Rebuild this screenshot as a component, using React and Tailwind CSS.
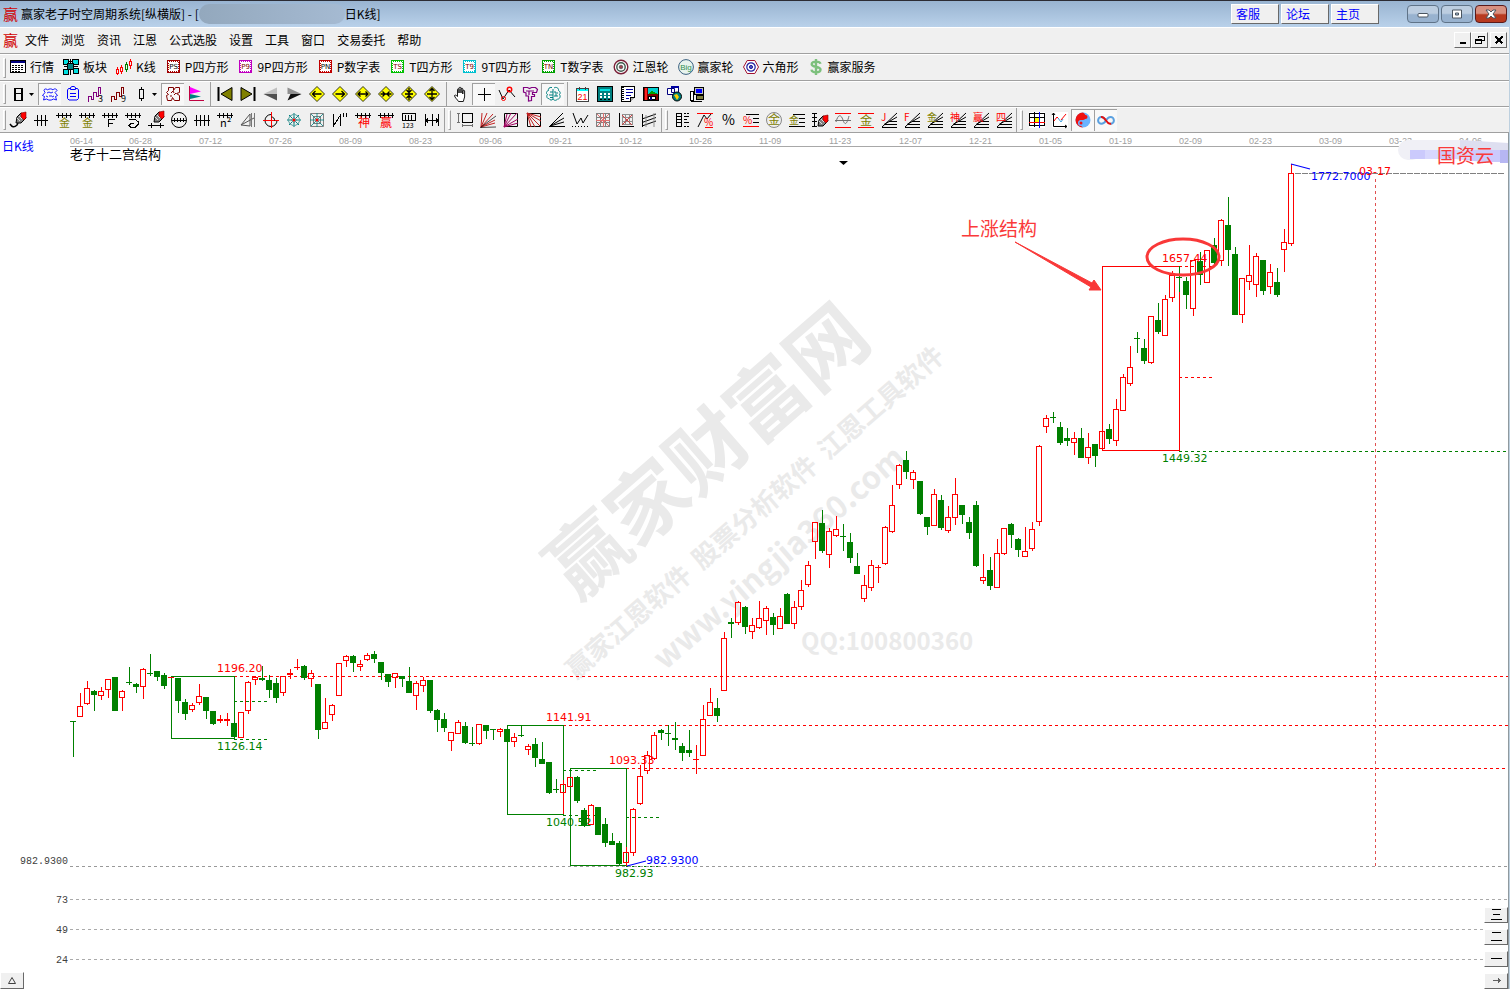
import clsx from "clsx";

const RED = "#ff0000";
const GREEN = "#008000";
const OLIVE = "#808000";
const SANS = "'Noto Sans CJK SC', 'Liberation Sans', sans-serif";
const NUM = "'DejaVu Sans', sans-serif";

/* ---------- icons ---------- */

function Svg({ children, crisp = true, size = "h-4 w-4" }) {
  return (
    <svg
      viewBox="0 0 16 16"
      className={clsx("shrink-0 overflow-visible", size)}
      fill="none"
      stroke="#000"
      shapeRendering={crisp ? "crispEdges" : "auto"}
      aria-hidden="true"
    >
      {children}
    </svg>
  );
}

function Glyph({ x, y, size = 10, fill = "#000", children }) {
  return (
    <text x={x} y={y} fontSize={size} fill={fill} stroke="none" fontFamily={SANS}>
      {children}
    </text>
  );
}

function TagIcon({ text, border, color = "#800000" }) {
  return (
    <Svg>
      <rect x="2.5" y="1.5" width="12" height="12" stroke={border} fill="#fff" />
      <rect x="3.5" y="2.5" width="10" height="10" stroke={border} strokeDasharray="1 1" />
      <text x="8.5" y="10" fontSize="7" textAnchor="middle" fill={color} stroke="none" fontFamily="'DejaVu Sans'">
        {text}
      </text>
    </Svg>
  );
}

// horizontal ruler with ticks, used by most of the period tools
const RULER = "M0 3.5h16M2.500 1v5M6.500 1v5M10.500 1v5M14.500 1v5";

function Ruler({ children }) {
  return (
    <Svg>
      <path d={RULER} />
      {children}
    </Svg>
  );
}

function Diamond({ children }) {
  return (
    <Svg crisp={false}>
      <path d="M8 .5 15.5 8 8 15.5.5 8z" fill="#ffff00" strokeWidth=".8" />
      <path d={children} strokeWidth="1.3" />
    </Svg>
  );
}

function Fan({ text, color }) {
  return (
    <Svg crisp={false}>
      <path d="M1 15 16 1M3 12.500 16 5M4 12.500h12M1 15.500h15M8 9.500h8" />
      <Glyph x={0} y={9} size={10} fill={color}>
        {text}
      </Glyph>
    </Svg>
  );
}

function Pen({ x = 0, y = 0 }) {
  return (
    <g transform={`translate(${x} ${y})`}>
      <path d="M4 11 5 5l4-4 4 2 1 3-5 5z" fill="#808080" />
      <path d="m9 1 5-1v6l-2 2-3-3z" fill="#ff0000" stroke="#800000" strokeWidth=".6" />
      <path d="m5 6 3 3M7 4l3 3" stroke="#ddd" />
    </g>
  );
}

const quoteTools = [
  ["行情", <Svg key="i"><rect x=".5" y="1.5" width="15" height="12" fill="#fff" /><path d="M1 3h14" stroke="#000080" strokeWidth="2" /><path d="M2 6.500h12M2 8.500h12M2 10.500h12M2 12.500h8" strokeDasharray="2 1" /></Svg>],
  ["板块", <Svg key="i"><path d="M.5.5h5v5h-5zM9.500.5h6v5h-6zM.5 10.500h5v5h-5zM10.500 9.500h5v5h-5z" fill="#00e0e0" /><path d="M4.500 4.500h6v6h-6z" fill="#008080" /><path d="M7.500 0v4M7.500 11v5M6 2.500h3M11 7.500h4M1 7.500h3" /></Svg>],
  ["K线", <Svg key="i"><path d="M.5 10.500h2v4h-2zM4.500 8.500h2v4h-2zM13.500 2.500h2v4h-2zM1.500 8v2M1.500 15v1M5.500 6v2M5.500 13v2M14.500 0v2M14.500 7v3" stroke="#ff0000" /><path d="M9.500 5.500h2v5h-2zM10.500 3v2M10.500 11v2" stroke="#008000" /></Svg>],
  ["P四方形", <TagIcon key="i" text="PS" border="#a00000" color="#000" />],
  ["9P四方形", <TagIcon key="i" text="P9" border="#c000c0" />],
  ["P数字表", <TagIcon key="i" text="PN" border="#c00000" color="#000" />],
  ["T四方形", <TagIcon key="i" text="TS" border="#00c000" />],
  ["9T四方形", <TagIcon key="i" text="T9" border="#00c0d0" />],
  ["T数字表", <TagIcon key="i" text="TN" border="#00a000" />],
  ["江恩轮", <Svg key="i" crisp={false}><circle cx="8" cy="8" r="6.8" stroke="#7a2038" strokeWidth="1.4" fill="#fff" /><circle cx="8" cy="8" r="4.2" stroke="#3c5a4c" strokeWidth="1.4" /><circle cx="8" cy="8" r="1.800" fill="#a04050" stroke="#555" strokeWidth=".8" /></Svg>],
  ["赢家轮", <Svg key="i" crisp={false}><circle cx="8" cy="8" r="7.400" stroke="#3a6080" fill="#e8f4ee" /><text x="8" y="11" fontSize="8" textAnchor="middle" fill="#2f8f4f" stroke="none" fontFamily="'Liberation Sans'">Big</text></Svg>],
  ["六角形", <Svg key="i" crisp={false}><path d="M4.200 1.500h7.600L15.500 8l-3.700 6.500H4.200L.5 8z" stroke="#a01030" fill="#fff" /><circle cx="8" cy="8" r="4.200" stroke="#2020a0" strokeWidth="1.200" /><circle cx="8" cy="8" r="1.600" fill="#5050c0" stroke="#2020a0" /></Svg>],
  ["赢家服务", <Svg key="i" crisp={false}><path d="M12.500 4.800C12 3 10 2.600 8 2.600c-2.500 0-4.300 1-4.300 2.700C3.700 9 12.500 6.800 12.500 10.600c0 1.800-2 2.800-4.400 2.800-2.300 0-4.300-.8-4.600-2.800M8 0v16" stroke="#7cc07c" strokeWidth="2.400" /></Svg>],
];

const viewTools = [
  { name: "日线", drop: true, icon: <Svg><path d="M4 2h9M4 14h9" /><path d="M5 1.500v13M12 1.500v13" strokeWidth="2" /><path d="M4 7.500h9" /></Svg> },
  { name: "云图", on: true, icon: <Svg crisp={false}><path d="M2 4.500c0-2 3-2 3.500-.5C7 2.500 10 2.500 11 4c1-2 4-1 4 .5L13 6.500l2.500 3-2 1 1 3.500-3-1c-2 1.500-5 1.500-7 0l-3 1 1-3.500-2-1 2.500-3zM5 7l2-1 2 1 2-1M4 10l2 1M12 10l-2 1M7 10h3" stroke="#0000ff" strokeWidth=".9" /></Svg> },
  { name: "报告", icon: <Svg crisp={false}><path d="M5 2.500H3.500L2.500 4v8.500L4 14h8l1.500-1.500V4l-1-1.500H11M5.500 3.500v-2L7 .5h2l1.500 1v2zM5 7.500h6M5 10.500h6" stroke="#0000ff" /></Svg> },
  { name: "三浪", icon: <Svg><path d="M.5 15.500v-5h3v3h2v-7h3v4h2v-9h2v6" stroke="#800080" /><Glyph x={10} y={16} size={9}>3</Glyph></Svg> },
  { name: "九浪", icon: <Svg><path d="M.5 15.500v-5h3v3h2v-7h3v4h2v-9h2v6" stroke="#800000" /><Glyph x={10} y={16} size={9}>9</Glyph></Svg> },
  { name: "K线样式", drop: true, icon: <Svg><path d="M6.500 3.500h4v9h-4zM8.500 1v2M8.500 13v2" /></Svg> },
  { name: "形态", on: true, icon: <Svg crisp={false}><path d="M3.500 1.500h5v3l2-3h4v5l-3 1 3 2v5h-5l-2-3-1 3h-4l-1-5 2-1-2-2 2-2zM6 7l2-2 1 2M9 9l2-2M5 10h2" stroke="#800000" /></Svg> },
  { name: "量价分布", icon: <Svg crisp={false}><path d="M2 1l11 4.500L2 8z" fill="#ff00ff" stroke="none" /><path d="M2 8l11 2.500L2 13z" fill="#008080" stroke="none" /><path d="M1.500 0v14.500H16" stroke="#c00040" /></Svg> },
  "sep",
  { name: "首页", icon: <Svg crisp={false}><path d="M1.500 1v14" strokeWidth="2" /><path d="M15 1.500v13L4 8z" fill={OLIVE} /></Svg> },
  { name: "末页", icon: <Svg crisp={false}><path d="M14.500 1v14" strokeWidth="2" /><path d="M1 1.500v13L12 8z" fill={OLIVE} /></Svg> },
  { name: "上一个", icon: <Svg crisp={false}><path d="M14 1.500V8H.5z" fill="#c0c0c0" stroke="none" /><path d="M14 14.500V8H.5z" fill="#505050" stroke="none" /></Svg> },
  { name: "下一个", icon: <Svg crisp={false}><path d="M1.500 1.500V8h14z" fill="#909090" stroke="none" /><path d="M1.500 14.500l3-6.500h11z" fill="#101010" stroke="none" /></Svg> },
  { name: "左移", icon: <Diamond>M12.500 8h-9M6.500 5l-3 3 3 3</Diamond> },
  { name: "右移", icon: <Diamond>M3.500 8h9M9.500 5l3 3-3 3</Diamond> },
  { name: "横向放大", icon: <Diamond>M3 8h10M5.500 5.500 3 8l2.500 2.500M10.500 5.500 13 8l-2.500 2.500</Diamond> },
  { name: "横向缩小", icon: <Diamond>M2.500 8h11M4.500 5.500 7 8l-2.500 2.500M11.500 5.500 9 8l2.500 2.500</Diamond> },
  { name: "纵向缩小", icon: <Diamond>M8 2v12M4 8h8M5.500 4 8 6.500 10.500 4M5.500 12 8 9.500l2.500 2.500</Diamond> },
  { name: "纵向放大", icon: <Diamond>M8 2v12M3 8h10M5.500 5 8 2.500 10.500 5M5.500 11 8 13.500l2.500-2.500</Diamond> },
  "sep",
  { name: "拖动", icon: <Svg crisp={false}><path d="M5.500 15.500c-1-2-4-4-4-6 1-1 2 0 3 1V3.500c0-1 1.500-1 1.500 0V7 2c0-1 2-1 2 0v5-4c0-1 1.800-1 1.800 0v5-3c0-1 1.800-1 1.800 0v6l-1.300 4.500z" fill="#fff" strokeWidth=".9" /></Svg> },
  { name: "十字光标", on: true, icon: <Svg><path d="M8.500 2v13M2 8.500h13" /></Svg> },
  { name: "折线", icon: <Svg crisp={false}><path d="M0 4l4 9 6-9 6 7" /><circle cx="4.500" cy="12.500" r="2" stroke="#ff0000" /><circle cx="10.500" cy="3.500" r="2.200" stroke="#ff0000" strokeWidth="1.500" /></Svg> },
  { name: "区间", icon: <Svg crisp={false}><path d="M1.500 1.500h4l2 1 2-1h4l2 2-1 3h-4v2h2v2h-3v4l-3 .5v-5H4v-3L1.500 6zM4 5h8M7 5v4" stroke="#800080" strokeWidth="1.200" /></Svg> },
  { name: "智能分析", on: true, icon: <Svg crisp={false}><path d="M7 1.500C4 1 3 3 3.500 4.500 1 5 1 8 2.500 8.500 1 10 2 13 4 12.500c1 2 3 2 4 .5V3M9 2c2-1.500 5 0 4.500 2.500 2 1 2 3 1 4 1.500 2 0 5-2 4.500-1 1.500-3 2-4.500 0M5 6h3M4 9h4M10 5v2h3M9 10h4M11 8v2M5 11.500h3" stroke="#008080" /></Svg> },
  "sep",
  { name: "日历", icon: <Svg><rect x="2.500" y="2.500" width="12" height="13" fill="#fff" stroke="#404040" /><path d="M3 4h11" stroke="#00ffff" strokeWidth="2" /><path d="M5.500 1v3M11.500 1v3" stroke="#404040" /><text x="8.500" y="13.500" fontSize="9" textAnchor="middle" fill="#ff0000" stroke="none" fontFamily="'Liberation Sans'">21</text></Svg> },
  { name: "计算器", icon: <Svg><rect x=".5" y=".5" width="15" height="15" fill="#008080" /><path d="M3 4h10" stroke="#00e0e0" strokeWidth="2" /><path d="M3 8h10M3 11h10" stroke="#fff" strokeWidth="2" strokeDasharray="2 2" /><path d="M3 13.500h10" strokeDasharray="2 2" /></Svg> },
  { name: "记事本", icon: <Svg><path d="M1.500.5h13v11l-4 4h-9z" fill="#fff" /><path d="M3 1v14" strokeWidth="2" strokeDasharray="1 1" /><path d="M6 3.500h7M6 6.500h7M6 9.500h5M6 12.500h3" stroke="#0000a0" /><path d="M14.500 11.500h-4v4" fill="#aaa" /></Svg> },
  { name: "保存图片", icon: <Svg><rect x=".5" y="1.500" width="15" height="13" fill="#800000" /><rect x="5" y="2" width="10" height="6" fill="#00d0d0" stroke="none" /><path d="m5 8 4-3 6 3z" fill="#00a000" stroke="none" /><rect x="2" y="2" width="2" height="12" fill="#ff2020" stroke="none" /><rect x="5.500" y="10.500" width="7" height="3" fill="#fff" /><path d="M7 11h2v3H7z" fill="#000080" stroke="none" /></Svg> },
  { name: "联网", icon: <Svg crisp={false}><path d="M1.500 2.500h7v6h-7zM5.500.5h7v6h-7z" fill="#fff" stroke="#000080" /><path d="M5 1h8" stroke="#0000a0" strokeWidth="2" /><circle cx="11" cy="10.500" r="4.500" fill="#008080" /><path d="m8 9 3-1 2 3-2 3z" fill="#ffd000" stroke="none" /></Svg> },
  { name: "远程", icon: <Svg><rect x="5.500" y="1.500" width="9" height="7" fill="#c0c0c0" /><rect x="7" y="3" width="6" height="4" fill="#0000ff" stroke="none" /><path d="M7.500 9.500h7v4h-7z" fill="#808040" /><path d="M1.500 5.500h3v9h-3z" fill="#fff" /><path d="M2 15.500h11" /></Svg> },
];

const periodTools = [
  ["画笔", <Svg key="i" crisp={false}><Pen x={2} /><path d="M0 12c2 3 4 4 7 1l1-2" strokeWidth="1.500" /></Svg>],
  ["等周期", <Svg key="i"><path d="M1 8.500h14M4.500 3v11M8.500 3v11M12.500 3v11" /></Svg>],
  ["黄金周期", <Ruler key="i"><Glyph x={3} y={15} fill={OLIVE} size={11}>金</Glyph></Ruler>],
  ["黄金时间", <Ruler key="i"><Glyph x={3} y={15} fill={OLIVE} size={11}>金</Glyph></Ruler>],
  ["斐波那契", <Ruler key="i"><path d="M6.500 15V7.500h6M6 11.500h5" /></Ruler>],
  ["螺旋周期", <Ruler key="i"><path d="M4 7.500h6l3 2v3l-3 3H6l-2-2 2-2h3" /></Ruler>],
  ["画线周期", <Svg key="i" crisp={false}><Pen x={2} y={-1} /><path d="M0 13.500h16M3.500 11v5M12.500 11v5" /></Svg>],
  ["圆周期", <Svg key="i" crisp={false}><circle cx="8" cy="8" r="7.500" /><path d="M1 8.500h14M3.500 6v4M6.500 6v4M9.500 6v4M12.500 6v4" /></Svg>],
  ["自由周期", <Svg key="i"><path d="M0 8.500h16M2.500 3v11M6.500 3v11M10.500 3v11M14.500 3v11" /></Svg>],
  ["平方周期", <Ruler key="i"><Glyph x={3} y={15} size={11}>n²</Glyph></Ruler>],
  ["速阻", <Svg key="i" crisp={false}><path d="m1 13 9-11v12zM1 13l13-7" stroke="#555" /><path d="M11.500 1v14M14.500 1v14" stroke="#777" /></Svg>],
  ["圆弧", <Svg key="i" crisp={false}><path d="M14 8.500A6 6 0 1 1 8 2.500" /><path d="M8.500 0v16M0 8.500h16" stroke="#ff0000" /><path d="M8.500 5a3 3 0 0 1 3 3.500" /></Svg>],
  ["蛛网", <Svg key="i" crisp={false}><path d="M8 1v14M1 8h14M3 3l10 10M13 3 3 13" stroke="#008080" /><path d="m8 2 4 2 2 4-2 4-4 2-4-2-2-4 2-4zM8 5l3 3-3 3-3-3z" stroke="#56a0a0" /><circle cx="8" cy="8" r="1.500" fill="#ff0000" stroke="none" /></Svg>],
  ["方网", <Svg key="i" crisp={false}><path d="M1.500 1.500h13v13h-13zM4.500 4.500h7v7h-7z" stroke="#808080" /><path d="M8 1v14M1 8h14M2 2l12 12M14 2 2 14" stroke="#008080" strokeWidth=".8" /><circle cx="8" cy="8" r="1.500" fill="#ff0000" stroke="none" /></Svg>],
  ["波浪尺", <Svg key="i"><path d="M1.500 2v12L8.500 3v11M11.500 1v4M14.500 1v4" /></Svg>],
  ["神奇周期", <Ruler key="i"><Glyph x={3} y={15} size={12} fill={RED}>神</Glyph></Ruler>],
  ["赢家周期", <Ruler key="i"><Glyph x={2} y={15} size={12} fill={RED}>赢</Glyph></Ruler>],
  ["刻度", <Svg key="i"><path d="M1 1.500h14M1 8.500h14M1.500 1v8M4.500 3v6M7.500 3v6M10.500 3v6M14.500 1v8" /><Glyph x={1} y={16} size={7}>123</Glyph></Svg>],
  ["平移周期", <Svg key="i"><path d="M1.500 2v12M8.500 2v12M14.500 2v12M2 8.500h12M4 6.500l-2 2 2 2M12 6.500l2 2-2 2" /></Svg>],
];

const shapeTools = [
  ["测量", <Svg key="i"><path d="M5.500 1.500h10v9h-10z" /><path d="M1.500 1v10M0 1.500h3M0 10.500h3M5 13.500h11M5.500 12v3M15.500 12v3" stroke="#707070" /></Svg>],
  ["江恩线", <Svg key="i" crisp={false}><path d="M1 15 2 1M1 15 7 1M1 15 13 2M1 15l14-7M1 15l14-4" stroke="#c02020" /><path d="M0 15.500 16 15M1 15 16 4" stroke="#000" strokeWidth=".7" /></Svg>],
  ["扇形框", <Svg key="i" crisp={false}><path d="M1.500 1.500h13v13h-13z" /><path d="M1 15 14 1M1 15 8 1M1 15l14-8M1 15 4 2M1 15l14-4" stroke="#a00060" /></Svg>],
  ["反扇形框", <Svg key="i" crisp={false}><path d="M1.500 1.500h13v13h-13z" /><path d="m1 1 14 14M1 1l8 14M1 1l14 8M1 1l4 14M1 1l14 4" stroke="#c02020" /></Svg>],
  ["射线", <Svg key="i" crisp={false}><path d="M1 14 14 1M1 14l14-8M1 14l14-4M0 14.500h16" /></Svg>],
  ["W形", <Svg key="i" crisp={false}><path d="m1 1 4 11 4-6 2 5 5-8" /><path d="M0 14.500h16" strokeDasharray="1 2" /></Svg>],
  ["网格", <Svg key="i"><path d="M1.500 1.500h13v13h-13zM5.500 1v14M10.500 1v14M1 5.500h14M1 10.500h14" stroke="#808080" /><path d="M2 2l12 12M14 2 2 14M1 8.500h14M8.500 1v14" stroke="#e07070" /></Svg>],
  ["坐标网格", <Svg key="i"><path d="M4.500 2.500h10v10h-10zM7.500 2v11M11.500 2v11M4 5.500h11M4 9.500h11" stroke="#909090" /><path d="m4 3 10 10M14 3 4 13" stroke="#d04040" /><path d="M1.500 1v14M1 14.500h15" /></Svg>],
  ["平行线", <Svg key="i" crisp={false}><path d="M1.500 2v13M1 7l14-5M1 10.500l14-5M1 14l14-5" /><path d="M13 1v14M5 3v12" stroke="#909090" /></Svg>],
];

const priceTools = [
  ["标尺", <Svg key="i"><path d="M2.500 1v14M7.500 1v14M2 1.500h5M2 4.500h5M2 7.500h5M2 10.500h5M2 14.500h5M10 1.500h2M13 1.500h2M10 4.500h5M10 7.500h3M10 10.500h5M10 14.500h2M13 14.500h2" /></Svg>],
  ["涨幅", <Svg key="i" crisp={false}><path d="M0 1.500h16M8 15.500h8" stroke="#ff0000" /><path d="m1 15 6-12 3 4 4-5" /><Glyph x={7} y={14} size={10} fill={RED}>%</Glyph></Svg>],
  ["百分比", <Svg key="i"><Glyph x={2} y={13} size={14}>%</Glyph></Svg>],
  ["百分线", <Svg key="i"><path d="M3 2.500h13M10 6.500h6M10 10.500h6" /><path d="M0 14.500h16" stroke="#ff0000" /><Glyph x={0} y={12} size={10} fill={RED}>%</Glyph></Svg>],
  ["金圆", <Svg key="i" crisp={false}><circle cx="8" cy="8" r="7.500" stroke="#888" /><Glyph x={2} y={12} size={12} fill={OLIVE}>金</Glyph></Svg>],
  ["金分割", <Svg key="i"><path d="M4 2.500h12M10 6.500h6M10 10.500h6M0 14.500h16" /><Glyph x={0} y={12} size={10} fill={OLIVE}>金</Glyph></Svg>],
  ["价格笔", <Svg key="i" crisp={false}><path d="M2.500 1v14M0 5.500h5M0 9.500h5M0 1.500h5M0 14.500h5" /><Pen x={2} y={3} /></Svg>],
  ["正弦", <Svg key="i" crisp={false}><path d="M0 1.500h16M0 15.500h16" stroke="#ff0000" /><path d="M1 10c2-8 5-8 7-2s4 4 6-4M0 8.500h16" stroke="#707070" /></Svg>],
  ["黄金线", <Svg key="i"><path d="M0 1.500h16M0 15.500h16" stroke="#ff0000" /><Glyph x={2} y={13} size={12} fill={OLIVE}>金</Glyph></Svg>],
  ["J线", <Fan key="i" text="J" color={RED} />],
  ["F线", <Fan key="i" text="F" color={RED} />],
  ["金线", <Fan key="i" text="金" color={OLIVE} />],
  ["神线", <Fan key="i" text="神" color={RED} />],
  ["赢线", <Fan key="i" text="赢" color={RED} />],
  ["四线", <Fan key="i" text="四" color={RED} />],
];

const structureTools = [
  ["九宫", <Svg key="i"><rect width="16" height="16" fill="#fff" stroke="none" /><rect x="5" y="5" width="6" height="5" fill="#ffff00" stroke="none" /><path d="M.5 1.500h15v12H.5zM5.500 0v15M0 5.500h16" /><path d="M0 10.500h16" stroke="#ff0000" /><path d="M10.500 0v16" stroke="#0000ff" /></Svg>],
  ["走势", <Svg key="i" crisp={false}><rect width="16" height="16" fill="#fff" stroke="none" /><path d="M1.500 1v13.500H15M0 3l1.500-2L3 3M13 13l2 1.500L13 16" /><path d="m2 9 3-4 2 2M9 8l5-6" stroke="#ff0000" /><path d="m6 6 3 4 2-3" stroke="#40a0e0" /></Svg>],
  ["太极", <Svg key="i" crisp={false}><circle cx="8" cy="8" r="7.500" fill="#6ab4ff" stroke="none" /><path d="M8 .5a7.500 7.500 0 0 0 0 15C4 13 5 8 8 8s5-4 0-7.500z" fill="#f01010" stroke="none" /><circle cx="10.500" cy="5" r="2" fill="#f01010" stroke="none" /><circle cx="6" cy="11" r="3" fill="#6ab4ff" stroke="none" /><circle cx="6" cy="11" r="1.500" fill="#f01010" stroke="none" /></Svg>, true],
  ["无限", <Svg key="i" crisp={false}><path d="M8 8.500C6 5.500 4.500 5 3.500 5a3.300 3.300 0 0 0 0 6.800C5 11.800 6.500 11 8 8.500s3-3.500 4.500-3.500a3.300 3.300 0 0 1 0 6.800" stroke="#5aa0e0" strokeWidth="2" /><path d="M3 5c2-.5 4 2 5 3.500s3 4 5 3" stroke="#e01010" strokeWidth="2" /></Svg>, true],
];

/* ---------- window chrome ---------- */

const menus = ["文件", "浏览", "资讯", "江恩", "公式选股", "设置", "工具", "窗口", "交易委托", "帮助"];

const BEVEL = "border border-t-white border-l-white border-r-[#696969] border-b-[#696969] bg-[#f0f0f0]";

function WindowButton({ label, danger, children }) {
  return (
    <button
      aria-label={label}
      className={clsx(
        "flex h-[18px] w-8 items-center justify-center rounded-sm border",
        danger
          ? "border-[#5a1a1a] bg-linear-to-b from-[#d89080] from-45% to-[#b83a20] to-55%"
          : "border-[#5f7388] bg-linear-to-b from-[#bccde0] from-45% to-[#98b2cf] to-55%"
      )}
    >
      <svg viewBox="0 0 12 10" className="h-2.5 w-3" fill="#fff" stroke="#4a5560" aria-hidden="true">
        {children}
      </svg>
    </button>
  );
}

function TitleBar() {
  return (
    <header className="flex h-[27px] items-center border-t border-[#2c2c34] bg-linear-to-b from-[#99b4d1] to-[#b9d1ea] pl-[3px] pr-[3px]">
      <span className="w-[18px] text-[15px] leading-4 text-[#d00000]">赢</span>
      <h1 className="flex items-center text-xs whitespace-pre text-black">
        赢家老子时空周期系统[纵横版] - [
        <span className="h-5 w-[146px] rounded-full bg-linear-to-r from-[#93a8bd] to-[#a5bad2]" />
        日K线]
      </h1>
      <div className="ml-auto flex gap-0.5">
        {["客服", "论坛", "主页"].map((t) => (
          <button key={t} className={clsx("h-5 w-12 pl-1 text-left text-xs leading-4 text-[#0000ff]", BEVEL)}>
            {t}
          </button>
        ))}
      </div>
      <div className="ml-7 flex gap-0.5">
        <WindowButton label="最小化">
          <rect x="1" y="4.500" width="10" height="3.500" rx="1" />
        </WindowButton>
        <WindowButton label="最大化">
          <path d="M1.500 1h9v8h-9zM4.500 4v2h3V4z" fillRule="evenodd" />
        </WindowButton>
        <WindowButton label="关闭" danger>
          <path d="M1 1h3l2 2 2-2h3L8 5l3 4H8L6 7 4 9H1l3-4z" />
        </WindowButton>
      </div>
    </header>
  );
}

function MdiButton({ label, children }) {
  return (
    <button aria-label={label} className={clsx("flex h-4 w-[17px] items-center justify-center", BEVEL)}>
      <svg viewBox="0 0 10 10" className="h-2.5 w-2.5" fill="none" stroke="#000" shapeRendering="crispEdges" aria-hidden="true">
        {children}
      </svg>
    </button>
  );
}

function MenuBar() {
  return (
    <nav className="flex h-[27px] items-center border-t border-b border-t-white border-b-[#a0a0a0] pr-0.5 pb-px pl-[3px]">
      <span className="w-[22px] text-[15px] leading-4 text-[#d00000]">赢</span>
      <div className="flex gap-3 text-xs">
        {menus.map((m) => (
          <button key={m}>{m}</button>
        ))}
      </div>
      <div className="ml-auto flex">
        <MdiButton label="最小化子窗口">
          <path d="M2 8h6" strokeWidth="2" />
        </MdiButton>
        <MdiButton label="还原子窗口">
          <path d="M3.500 3V1.500h6v4H7M3 1h7M.5 4.500h6v4h-6zM0 5h7" />
        </MdiButton>
        <span className="w-0.5" />
        <MdiButton label="关闭子窗口">
          <path d="m1.500 1.500 7 7m0-7-7 7" strokeWidth="2" />
        </MdiButton>
      </div>
    </nav>
  );
}

function Grip() {
  return <span className="h-5 w-[3px] shrink-0 border border-t-white border-l-white border-r-[#a0a0a0] border-b-[#a0a0a0]" />;
}

function ToolButton({ name, on, drop, children }) {
  return (
    <>
      <button
        aria-label={name}
        title={name}
        className={clsx(
          "flex h-[22px] shrink-0 items-center justify-center",
          drop ? "w-[21px]" : "w-[23px]",
          on ? "border-t border-l border-[#a0a0a0] bg-[#f8f8f8] pb-px" : "pl-px"
        )}
      >
        {children}
      </button>
      {drop && (
        <button aria-label={`${name}选项`} className="flex h-[22px] w-2.5 shrink-0 items-center pl-px">
          <svg viewBox="0 0 5 3" className="h-[3px] w-[5px]" aria-hidden="true">
            <path d="M0 0h5L2.500 3z" />
          </svg>
        </button>
      )}
    </>
  );
}

function GroupBreak() {
  return (
    <div className="flex h-full w-2.5 shrink-0 items-center justify-between pr-0.5 pl-px">
      <span className="h-full w-px bg-[#a0a0a0]" />
      <Grip />
    </div>
  );
}

function Toolbar({ height, children }) {
  return (
    <div role="toolbar" className={clsx("flex items-center border-t border-b border-t-white border-b-[#a0a0a0] pl-[3px]", height)}>
      <Grip />
      {children}
    </div>
  );
}

function ToolGroup({ items }) {
  return items.map(([name, icon, on]) => (
    <ToolButton key={name} name={name} on={on}>
      {icon}
    </ToolButton>
  ));
}

/* ---------- chart ---------- */

const FIRST_X = 73;
const STEP = 7;

// [up/down, high, body top, body bottom, low]
const candles = [
  ["g", 721, 721, 722, 757], ["r", 693, 706, 717, 717], ["r", 681, 688, 704, 705], ["g", 690, 691, 695, 711],
  ["r", 687, 691, 696, 700], ["r", 679, 679, 690, 698], ["g", 677, 677, 711, 711], ["r", 690, 691, 698, 711],
  ["g", 667, 682, 683, 685], ["g", 683, 684, 687, 693], ["r", 668, 669, 687, 699], ["g", 654, 673, 674, 676],
  ["g", 671, 671, 677, 681], ["g", 673, 675, 686, 689], ["r", 677, 677, 678, 678], ["g", 678, 678, 701, 713],
  ["g", 699, 702, 714, 720], ["r", 703, 705, 710, 712], ["r", 684, 696, 703, 705], ["g", 697, 697, 711, 719],
  ["g", 711, 711, 724, 725], ["r", 715, 719, 721, 723], ["r", 713, 719, 721, 726], ["g", 723, 723, 737, 737],
  ["r", 712, 712, 738, 738], ["r", 681, 682, 711, 714], ["r", 676, 677, 680, 685], ["g", 666, 678, 680, 681],
  ["g", 675, 680, 690, 698], ["g", 678, 683, 698, 703], ["r", 676, 676, 693, 696], ["r", 669, 673, 675, 679],
  ["r", 659, 667, 668, 670], ["g", 665, 666, 678, 680], ["r", 670, 673, 679, 687], ["g", 684, 684, 730, 739],
  ["r", 698, 722, 729, 729], ["r", 704, 705, 715, 721], ["r", 663, 663, 696, 696], ["r", 655, 656, 661, 667],
  ["g", 655, 656, 663, 672], ["r", 660, 664, 667, 671], ["r", 653, 655, 660, 661], ["g", 651, 654, 659, 663],
  ["g", 662, 662, 673, 680], ["g", 674, 674, 682, 687], ["r", 673, 673, 678, 688], ["g", 676, 676, 679, 687],
  ["g", 667, 681, 693, 693], ["r", 681, 683, 696, 710], ["r", 677, 680, 686, 692], ["g", 680, 680, 711, 713],
  ["g", 709, 710, 720, 732], ["g", 713, 719, 728, 732], ["r", 732, 732, 741, 751], ["r", 720, 722, 734, 734],
  ["g", 722, 726, 743, 744], ["g", 727, 743, 744, 746], ["r", 724, 724, 744, 745], ["g", 725, 725, 731, 739],
  ["g", 729, 729, 730, 740], ["r", 728, 729, 732, 737], ["g", 729, 729, 742, 742], ["r", 733, 737, 742, 747],
  ["g", 725, 735, 736, 737], ["r", 744, 746, 750, 755], ["g", 738, 744, 758, 767], ["g", 742, 759, 764, 764],
  ["g", 762, 762, 793, 794], ["g", 779, 789, 790, 793], ["r", 780, 784, 793, 814], ["r", 777, 777, 787, 787],
  ["g", 776, 777, 801, 803], ["g", 808, 810, 826, 827], ["r", 804, 805, 825, 825], ["g", 807, 807, 835, 835],
  ["g", 818, 824, 843, 847], ["g", 833, 841, 845, 845], ["g", 841, 843, 864, 865], ["r", 847, 852, 863, 866],
  ["r", 808, 809, 853, 856], ["r", 765, 776, 804, 805], ["r", 751, 755, 771, 774], ["r", 732, 735, 759, 760],
  ["g", 729, 730, 733, 740], ["g", 725, 733, 734, 746], ["g", 722, 738, 740, 750], ["g", 743, 746, 753, 761],
  ["g", 730, 750, 753, 757], ["r", 745, 759, 760, 774], ["r", 705, 719, 756, 756], ["r", 688, 702, 716, 716],
  ["g", 698, 708, 716, 722], ["r", 632, 638, 691, 691], ["g", 618, 622, 624, 638], ["r", 601, 602, 623, 625],
  ["g", 606, 607, 627, 634], ["r", 618, 625, 632, 639], ["r", 601, 618, 628, 629], ["r", 606, 608, 621, 635],
  ["g", 613, 617, 625, 635], ["r", 608, 616, 629, 629], ["g", 593, 594, 624, 624], ["r", 601, 607, 624, 629],
  ["r", 580, 590, 607, 610], ["r", 561, 565, 585, 587], ["r", 522, 522, 542, 559], ["g", 510, 523, 551, 553],
  ["r", 528, 531, 555, 568], ["r", 516, 529, 536, 537], ["g", 524, 536, 537, 551], ["g", 533, 542, 558, 563],
  ["g", 553, 566, 574, 574], ["r", 575, 585, 599, 602], ["r", 560, 565, 588, 591], ["r", 565, 567, 568, 583],
  ["r", 526, 527, 564, 565], ["r", 485, 505, 532, 533], ["r", 464, 465, 485, 489], ["g", 451, 460, 472, 479],
  ["r", 470, 472, 480, 489], ["g", 481, 481, 514, 515], ["g", 517, 517, 527, 535], ["r", 489, 494, 526, 526],
  ["g", 495, 500, 528, 530], ["r", 506, 517, 531, 533], ["r", 478, 494, 518, 525], ["g", 505, 505, 515, 524],
  ["g", 517, 522, 533, 539], ["g", 501, 505, 566, 567], ["r", 554, 577, 581, 584], ["g", 557, 570, 586, 590],
  ["r", 539, 553, 588, 588], ["r", 528, 528, 554, 555], ["g", 523, 524, 535, 548], ["g", 538, 539, 550, 557],
  ["r", 527, 551, 557, 557], ["r", 522, 529, 549, 551], ["r", 445, 446, 522, 526], ["r", 415, 418, 427, 433],
  ["g", 412, 417, 418, 423], ["g", 422, 427, 443, 445], ["g", 428, 438, 441, 446], ["r", 432, 438, 443, 455],
  ["g", 428, 438, 458, 458], ["r", 433, 447, 458, 464], ["g", 444, 444, 456, 467], ["r", 431, 431, 449, 449],
  ["g", 424, 429, 439, 444], ["r", 399, 409, 441, 446], ["r", 374, 377, 411, 411], ["r", 346, 367, 384, 386],
  ["g", 332, 338, 339, 353], ["g", 339, 348, 361, 364], ["r", 316, 316, 363, 364], ["g", 303, 320, 332, 334],
  ["r", 295, 299, 336, 336], ["r", 271, 275, 298, 302], ["g", 266, 277, 278, 292], ["g", 277, 281, 295, 309],
  ["r", 260, 260, 309, 316], ["g", 252, 261, 275, 285], ["r", 250, 250, 283, 283], ["g", 238, 245, 263, 265],
  ["r", 219, 220, 261, 266], ["g", 197, 225, 250, 266], ["g", 247, 254, 315, 315], ["r", 278, 278, 315, 323],
  ["r", 245, 275, 282, 290], ["r", 253, 256, 285, 297], ["g", 260, 260, 291, 295], ["r", 264, 272, 287, 294],
  ["g", 268, 282, 295, 297], ["r", 229, 242, 250, 272], ["r", 164, 173, 244, 246],
];

const dates = [
  "06-14", "06-28", "07-12", "07-26", "08-09", "08-23", "09-06", "09-21", "10-12", "10-26", "11-09",
  "11-23", "12-07", "12-21", "01-05", "01-19", "02-09", "02-23", "03-09", "03-23", "04-06",
];

// [x1, x2, y, color]
const levels = [
  [234, 1508, 676, RED], [563, 1508, 725, RED], [626, 1508, 768, RED], [1179, 1213, 377, RED], [1179, 1213, 266, RED],
  [234, 268, 701, GREEN], [234, 268, 739, GREEN], [563, 597, 770, GREEN], [563, 597, 815, GREEN],
  [626, 660, 817, GREEN], [626, 660, 866, GREEN], [1179, 1508, 451, GREEN],
  [70, 1508, 866, "#999999"], [70, 1508, 899, "#aaaaaa"], [70, 1508, 929, "#aaaaaa"], [70, 1508, 959, "#aaaaaa"],
];

// [x, y, width, height, color]
const boxes = [
  [171, 676, 63, 62, GREEN], [507, 725, 56, 89, GREEN], [570, 768, 56, 97, GREEN], [1102, 266, 77, 184, RED],
];

const prices = [
  [217, 672, "1196.20", RED], [217, 750, "1126.14", GREEN], [546, 721, "1141.91", RED], [609, 764, "1093.33", RED],
  [546, 826, "1040.52", GREEN], [615, 877, "982.93", GREEN], [646, 864, "982.9300", "#0000ff"],
  [1162, 262, "1657.44", RED], [1162, 462, "1449.32", GREEN], [1311, 180, "1772.7000", "#0000ff"],
  [1359, 175, "03-17", RED],
];

const axis = [[864, "982.9300"], [903, "73"], [933, "49"], [963, "24"]];

function Candle({ index, data }) {
  const [dir, high, top, bottom, low] = data;
  const x = FIRST_X + index * STEP;
  const hollow = dir === "r" && bottom - top > 2;
  const color = dir === "r" ? RED : GREEN;
  return (
    <g>
      {top > high && <rect x={x} y={high} width="1" height={top - high} fill={color} />}
      {low > bottom && <rect x={x} y={bottom} width="1" height={low - bottom} fill={color} />}
      {hollow ? (
        <rect x={x - 2.5} y={top + 0.5} width="5" height={bottom - top - 1} fill="none" stroke={color} />
      ) : (
        <rect x={x - 3} y={top} width="6" height={bottom - top} fill={color} />
      )}
    </g>
  );
}

function Watermark() {
  return (
    <g fill="#eaeaea" fontFamily={SANS} fontWeight="700">
      <text transform="translate(577 602) rotate(-41)" fontSize="79">赢家财富网</text>
      <g transform="translate(576 680) rotate(-41)" fontSize="26">
        <text>赢家江恩软件</text>
        <text x="167">股票分析软件</text>
        <text x="334">江恩工具软件</text>
      </g>
      <text transform="translate(665 671) rotate(-41)" fontSize="31">www.yingjia360.com</text>
      <text x="801" y="650" fontSize="24">QQ:100800360</text>
    </g>
  );
}

function Chart() {
  return (
    <svg viewBox="0 133 1508 856" className="block w-full" role="img" aria-label="日K线图">
      <Watermark />

      <g fontFamily="'Liberation Sans', sans-serif" fontSize="9" fill="#a0a0a0">
        {dates.map((d, i) => (
          <text key={d} x={i === 0 ? 70 : 59 + i * 70} y="144">{d}</text>
        ))}
      </g>
      <rect x="70" y="146" width="1438" height="1" fill="#a8a8a8" />
      <g fontFamily={SANS}>
        <text x="2" y="151" fontSize="12" fill="#0000ff">日K线</text>
        <text x="70" y="159" fontSize="13" fill="#000">老子十二宫结构</text>
      </g>
      <path d="M839 161h9l-4.500 4z" fill="#000" />

      <g shapeRendering="crispEdges">
        {levels.map(([x1, x2, y, color]) => (
          <line key={`${x1}-${y}`} x1={x1} x2={x2} y1={y + 0.5} y2={y + 0.5} stroke={color} strokeDasharray="3 3" />
        ))}
        <line x1="1295" x2="1504" y1="173.5" y2="173.5" stroke="#808080" strokeDasharray="6 1" />
        <line x1="1375.5" x2="1375.5" y1="179" y2="866" stroke="#e05050" strokeDasharray="3 3" />
        {boxes.map(([x, y, w, h, color]) => (
          <rect key={`${x}-${y}`} x={x + 0.5} y={y + 0.5} width={w} height={h} fill="none" stroke={color} />
        ))}
        {candles.map((c, i) => (
          <Candle key={i} index={i} data={c} />
        ))}
      </g>
      <path d="M1291 164l19 5M627 866l19-5" stroke="#0000ff" strokeWidth="1.200" />

      {/* censored stock code behind the name */}
      <g>
        <rect x="1398" y="140" width="24" height="20" rx="10" fill="#f0f0f6" />
        <path d="M1408 140h52l40 3h8v7h-100z" fill="#f0f0f6" />
        <path d="M1460 140l48 3v8h-48z" fill="#dedff0" />
        <path d="M1410 150h98v12h-25l-27-3h-46z" fill="#cbcafc" />
        <path d="M1425 150h15v9h-15zM1455 150h15v9h-15z" fill="#d8d8fd" />
        <path d="M1500 150h8v13h-8z" fill="#b6b6f2" />
      </g>

      <g fontFamily={NUM} fontSize="11">
        {prices.map(([x, y, t, color]) => (
          <text key={t} x={x} y={y} fill={color}>{t}</text>
        ))}
      </g>
      <g fontFamily="'Liberation Mono', monospace" fontSize="10" fill="#404040" textAnchor="end">
        {axis.map(([y, t]) => (
          <text key={t} x="68" y={y}>{t}</text>
        ))}
      </g>

      <g fontFamily={SANS} fontSize="19" fill="#fa3a3a">
        <text x="961" y="236">上涨结构</text>
        <text x="1437" y="163">国资云</text>
      </g>
      <ellipse cx="1183" cy="257" rx="36" ry="18" fill="none" stroke="#f93838" strokeWidth="3" />
      <path d="M1015 242l76 45-2 3 12 0-7-10-2 3z" fill="#f93838" stroke="#f93838" strokeWidth="1" />
    </svg>
  );
}

function PaneButtons() {
  return (
    <>
      <button aria-label="展开" className={clsx("absolute bottom-0 left-0 flex h-[17px] w-6 items-center justify-center", BEVEL)}>
        <svg viewBox="0 0 8 7" className="h-[7px] w-2" fill="none" stroke="#404040" aria-hidden="true">
          <path d="M4 .5 7.500 6.500h-7z" />
        </svg>
      </button>
      <div className="absolute right-0 bottom-0 flex flex-col gap-1.5">
        {[
          ["三窗口", "M7 1.500h9M8 6.500h7M6 11.500h11"],
          ["二窗口", "M7 2.500h9M6 10.500h11"],
          ["一窗口", "M6 6.500h11"],
          ["右移", "M8 6.500h7M13 4.500l2 2-2 2"],
        ].map(([name, d], i) => (
          <button key={name} aria-label={name} className={clsx("h-4 w-6", BEVEL)}>
            <svg viewBox="0 0 22 14" className="h-3.5 w-[22px]" fill="none" stroke={i === 3 ? "#606060" : "#000"} shapeRendering="crispEdges" aria-hidden="true">
              <path d={d} />
            </svg>
          </button>
        ))}
      </div>
    </>
  );
}

export default function App() {
  return (
    <div className="bg-[#f0f0f0] font-['Noto_Sans_CJK_SC','Liberation_Sans',sans-serif] text-xs leading-4 text-black">
      <TitleBar />
      <div className="border-r border-[#bdd0df]">
        <MenuBar />
        <Toolbar height="h-[27px]">
          <div className="flex pb-px pl-1">
            {quoteTools.map(([name, icon]) => (
              <button key={name} className="flex items-center gap-1 pr-[9px] whitespace-nowrap">
                {icon}
                {name}
              </button>
            ))}
          </div>
        </Toolbar>
        <Toolbar height="h-[26px]">
          <span className="w-px" />
          {viewTools.map((t, i) =>
            t === "sep" ? (
              <span key={i} className="flex h-full w-1.5 shrink-0 justify-center">
                <span className="h-full w-px bg-[#a0a0a0]" />
              </span>
            ) : (
              <ToolButton key={t.name} name={t.name} on={t.on} drop={t.drop}>
                {t.icon}
              </ToolButton>
            )
          )}
        </Toolbar>
        <Toolbar height="h-[26px]">
          <ToolGroup items={periodTools} />
          <GroupBreak />
          <ToolGroup items={shapeTools} />
          <GroupBreak />
          <ToolGroup items={priceTools} />
          <GroupBreak />
          <ToolGroup items={structureTools} />
        </Toolbar>
        <main className="relative border-r border-[#909a9f] bg-white">
          <Chart />
          <PaneButtons />
        </main>
      </div>
    </div>
  );
}
